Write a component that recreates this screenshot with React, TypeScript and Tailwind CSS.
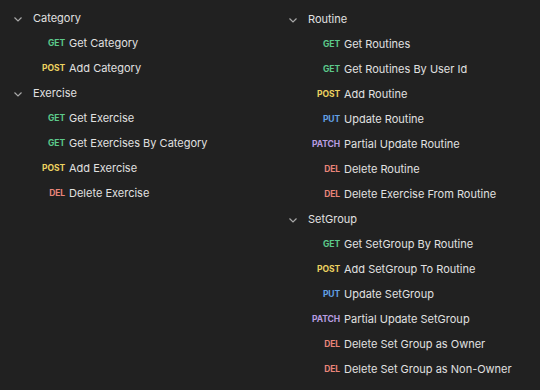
import React from "react";

type Method = "GET" | "POST" | "PUT" | "PATCH" | "DEL";

type Folder = {
	name: string;
	requests: [Method, string][];
};

const methodColor: Record<Method, string> = {
	GET: "text-[#5cc98a]",
	POST: "text-[#ecd260]",
	PUT: "text-[#63a1e6]",
	PATCH: "text-[#b79de0]",
	DEL: "text-[#ea8579]",
};

const left: Folder[] = [
	{
		name: "Category",
		requests: [
			["GET", "Get Category"],
			["POST", "Add Category"],
		],
	},
	{
		name: "Exercise",
		requests: [
			["GET", "Get Exercise"],
			["GET", "Get Exercises By Category"],
			["POST", "Add Exercise"],
			["DEL", "Delete Exercise"],
		],
	},
];

const right: Folder[] = [
	{
		name: "Routine",
		requests: [
			["GET", "Get Routines"],
			["GET", "Get Routines By User Id"],
			["POST", "Add Routine"],
			["PUT", "Update Routine"],
			["PATCH", "Partial Update Routine"],
			["DEL", "Delete Routine"],
			["DEL", "Delete Exercise From Routine"],
		],
	},
	{
		name: "SetGroup",
		requests: [
			["GET", "Get SetGroup By Routine"],
			["POST", "Add SetGroup To Routine"],
			["PUT", "Update SetGroup"],
			["PATCH", "Partial Update SetGroup"],
			["DEL", "Delete Set Group as Owner"],
			["DEL", "Delete Set Group as Non-Owner"],
		],
	},
];

function Chevron() {
	return (
		<svg width="10" height="10" viewBox="0 0 10 10" className="shrink-0">
			<polyline
				points="1.5,3.5 5,7 8.5,3.5"
				fill="none"
				stroke="#a8a8a8"
				strokeWidth="1.2"
			/>
		</svg>
	);
}

function FolderTree({ folder }: { folder: Folder }) {
	return (
		<div>
			<div className="flex items-center h-[25px]">
				<Chevron />
				<span className="ml-[10px] text-[11px] text-[#e0e0e0]">{folder.name}</span>
			</div>
			{folder.requests.map(([m, name], i) => (
				<div key={i} className="flex items-center h-[25px] pl-[20px]">
					<span
						className={`w-[32px] text-right text-[8.5px] font-bold tracking-[-0.1px] ${methodColor[m]}`}
					>
						{m}
					</span>
					<span className="ml-[4px] text-[11px] text-[#e0e0e0] whitespace-nowrap">
						{name}
					</span>
				</div>
			))}
		</div>
	);
}

export default function App() {
	return (
		<div
			className="w-[540px] h-[390px] bg-[#212121] flex overflow-hidden"
			style={{ fontFamily: "Inter, 'Liberation Sans', sans-serif" }}
		>
			<div className="w-[275px] pl-[13px] pt-[6px]">
				{left.map(f => (
					<FolderTree key={f.name} folder={f} />
				))}
			</div>
			<div className="flex-1 pl-[13px] pt-[7px]">
				{right.map(f => (
					<FolderTree key={f.name} folder={f} />
				))}
			</div>
		</div>
	);
}
